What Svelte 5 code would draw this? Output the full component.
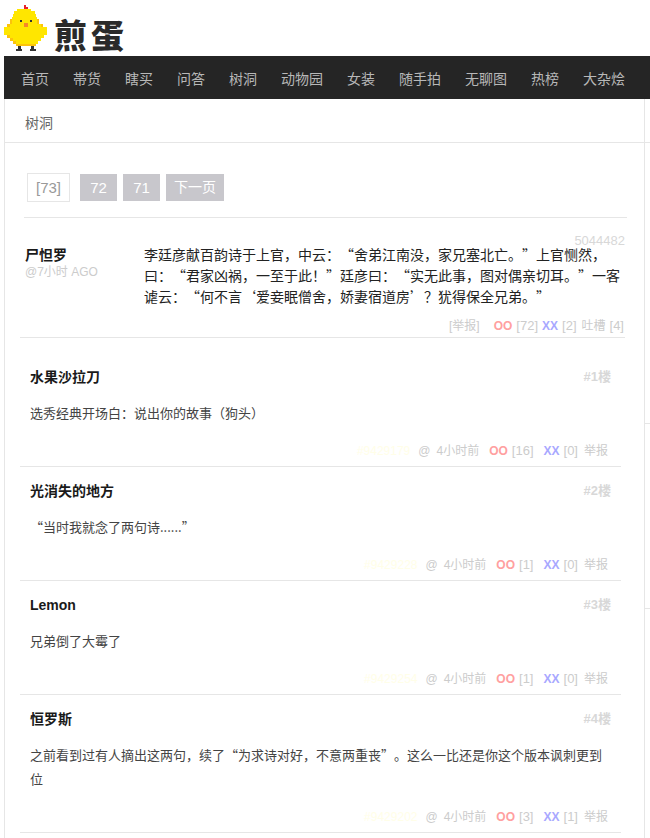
<script>
  const nav = ["首页", "帯货", "瞎买", "问答", "树洞", "动物园", "女装", "随手拍", "无聊图", "热榜", "大杂烩"];

  const Y = "#ffe600";
  const O = "#fcc30b";
  // chick rows: [y, height, x, width, colour]
  const chick = [
    [5, 2, 24, 2, "#e8202a"], [7, 2, 24, 4, "#e8202a"],
    [9, 2, 17, 14, Y], [11, 3, 14, 21, Y], [14, 3, 13, 23, Y], [17, 2, 12, 25, Y],
    [19, 5, 10, 29, Y], [24, 3, 7, 36, Y], [27, 8, 4, 43, Y],
    [35, 3, 7, 37, Y], [38, 3, 10, 31, Y], [41, 3, 13, 25, Y], [44, 2, 16, 20, O],
    [19, 5, 10, 2, O], [24, 3, 7, 3, O], [19, 5, 37, 2, O], [24, 3, 41, 2, O],
    [35, 3, 7, 3, O], [38, 3, 10, 3, O], [41, 3, 13, 3, O]
  ];
  const pixels = [
    [20, 2, 20, 2, "#333"], [20, 2, 30, 2, "#333"], [23, 4, 24, 4, "#f5862a"],
    [46, 3, 18, 3, "#333"], [49, 2, 16, 6, "#333"], [46, 3, 31, 3, "#333"], [49, 2, 30, 6, "#333"]
  ];
  const replies = [
    { name: "水果沙拉刀", floor: 1, text: "选秀经典开场白：说出你的故事（狗头）", id: "#9429179", oo: 16, xx: 0 },
    { name: "光消失的地方", floor: 2, text: "“当时我就念了两句诗......”", id: "#9429228", oo: 1, xx: 0 },
    { name: "Lemon", floor: 3, text: "兄弟倒了大霉了", id: "#9429254", oo: 1, xx: 0 },
    { name: "恒罗斯", floor: 4, text: "之前看到过有人摘出这两句，续了“为求诗对好，不意两重丧”。这么一比还是你这个版本讽刺更到位", id: "#9429202", oo: 3, xx: 1 }
  ];
</script>

<header class="logo">
  <svg class="chick" width="48" height="52" viewBox="0 0 48 52">
    {#each [...chick, ...pixels] as [y, h, x, w, c]}
      <rect {x} {y} width={w} height={h} fill={c} />
    {/each}
  </svg>
  <span class="wordmark">煎蛋</span>
</header>

<nav>
  {#each nav as item}
    <span>{item}</span>
  {/each}
</nav>

<div class="wrap">
  <main>
    <div class="crumb">树洞</div>

    <div class="pager">
      <span class="current">[73]</span>
      <span class="page first">72</span>
      <span class="page">71</span>
      <span class="page next">下一页</span>
    </div>

    <article class="post">
      <div class="author">
        <strong>尸怛罗</strong>
        <small>@7小时 AGO</small>
      </div>
      <p>李廷彦献百韵诗于上官，中云：“舍弟江南没，家兄塞北亡。”上官恻然，曰：“君家凶祸，一至于此！”廷彦曰：“实无此事，图对偶亲切耳。”一客谑云：“何不言‘爱妾眠僧舍，娇妻宿道房’？犹得保全兄弟。”</p>
      <div class="pid">5044482</div>
      <div class="post-foot">
        <span class="report">[举报]</span>
        <b class="oo">OO</b>
        <span class="n">[72]</span>
        <b class="xx">XX</b>
        <span class="n">[2]</span>
        <span>吐槽</span>
        <span class="n">[4]</span>
      </div>
    </article>

    <div class="replies">
      {#each replies as r}
        <section class="reply">
          <div class="top">
            <strong>{r.name}</strong>
            <span class="floor">#{r.floor}楼</span>
          </div>
          <p>{r.text}</p>
          <div class="foot">
            <span class="id">{r.id}</span>
            <span>@</span>
            <span class="time">4小时前</span>
            <b class="oo">OO</b>
            <span class="n">[{r.oo}]</span>
            <b class="xx">XX</b>
            <span class="n">[{r.xx}]</span>
            <span>举报</span>
          </div>
        </section>
      {/each}
    </div>
  </main>
  <aside>
    <div class="s1"></div>
    <div class="s2"></div>
    <div class="s3"></div>
  </aside>
</div>

<style>
  :global(body) {
    background: #fff;
    font-family: "Liberation Sans", "Noto Sans CJK SC", sans-serif;
    overflow: hidden;
    height: 838px;
  }
  p {
    margin: 0;
    font-family: "Noto Sans CJK SC", sans-serif;
    text-spacing-trim: space-all;
  }
  .logo {
    height: 56px;
    display: flex;
    align-items: flex-start;
  }
  .chick {
    display: block;
  }
  .wordmark {
    font-family: "Noto Sans CJK SC", sans-serif;
    font-weight: 900;
    font-size: 33px;
    line-height: 33px;
    letter-spacing: 4px;
    color: #2a2a2a;
    margin: 18px 0 0 6px;
  }
  nav {
    margin-left: 4px;
    height: 43px;
    background: #252525;
    display: flex;
    align-items: center;
    gap: 24px;
    padding-left: 17px;
    font-size: 14px;
    color: #b8b8b8;
  }
  .wrap {
    margin-left: 4px;
    border-left: 1px solid #e6e6e6;
    display: flex;
    height: 739px;
    font-size: 14px;
  }
  main {
    box-sizing: border-box;
    flex: none;
    width: 640px;
    border-right: 1px solid #e6e6e6;
  }
  aside {
    flex: 1;
  }
  aside div {
    border-bottom: 1px solid #e6e6e6;
  }
  .s1 {
    height: 43px;
  }
  .s2 {
    height: 280px;
  }
  .s3 {
    height: 184px;
  }
  .crumb {
    height: 43px;
    line-height: 48px;
    padding-left: 20px;
    color: #666;
    border-bottom: 1px solid #e6e6e6;
  }
  .pager {
    display: flex;
    align-items: center;
    gap: 6px;
    margin: 30px 17px 0 19px;
    padding: 0 0 15px 3px;
    border-bottom: 1px solid #e6e6e6;
    font-size: 15px;
  }
  .pager span {
    height: 27px;
    line-height: 27px;
    min-width: 37px;
    text-align: center;
    color: #fff;
    background: #c8c7cc;
  }
  .pager .first {
    margin-left: 4px;
  }
  .pager .next {
    padding: 0 8px;
    font-size: 14px;
  }
  .pager .current {
    box-sizing: border-box;
    width: 43px;
    height: 29px;
    line-height: 27px;
    background: #fff;
    border: 1px solid #e6e6e6;
    color: #999;
  }
  .post {
    position: relative;
    display: grid;
    grid-template-columns: 119px 480px;
    margin: 0 19px 0 15px;
    padding: 26px 0 4px 5px;
    border-bottom: 1px solid #e6e6e6;
  }
  .author {
    padding-top: 2px;
  }
  .author strong {
    display: block;
    color: #1a1a1a;
    line-height: 18px;
  }
  .author small {
    display: block;
    color: #ccc;
    font-size: 12px;
    line-height: 16px;
  }
  .post p {
    line-height: 21px;
    color: #222;
  }
  .pid {
    position: absolute;
    top: 15px;
    right: 0;
    color: #d8d8d8;
    font-size: 13px;
    line-height: 15px;
  }
  .post-foot {
    grid-column: 1 / -1;
    display: flex;
    justify-content: flex-end;
    align-items: baseline;
    gap: 4px;
    margin-top: 12px;
    font-size: 12px;
    line-height: 14px;
    color: #ccc;
  }
  .report {
    margin-right: 10px;
  }
  .foot .n + b {
    margin-left: 6px;
  }
  .post-foot .n + span {
    margin-left: 1px;
  }
  .n {
    font-size: 13px;
  }
  .oo {
    color: #ffa0a0;
  }
  .xx {
    color: #a8a8ff;
  }
  .replies {
    margin: 15px 23px 0 15px;
  }
  .reply {
    padding: 16px 10px 7px;
    border-bottom: 1px solid #e6e6e6;
  }
  .top {
    display: flex;
    justify-content: space-between;
    align-items: center;
    line-height: 16px;
  }
  .top strong {
    color: #1a1a1a;
  }
  .floor {
    color: #d8d8d8;
    font-size: 13px;
    font-weight: bold;
  }
  .reply p {
    margin-top: 16px;
    line-height: 24px;
    color: #444;
    font-size: 13px;
  }
  .foot {
    display: flex;
    justify-content: flex-end;
    align-items: baseline;
    gap: 4px;
    margin: 18px 3px 0 0;
    line-height: 16px;
    font-size: 12px;
    color: #ccc;
  }
  .foot .id {
    color: #fffee8;
    margin-right: 4px;
  }
  .foot .time {
    margin: 0 6px 0 2px;
  }
  .foot .n:nth-last-child(2) {
    margin-right: 2px;
  }
</style>
